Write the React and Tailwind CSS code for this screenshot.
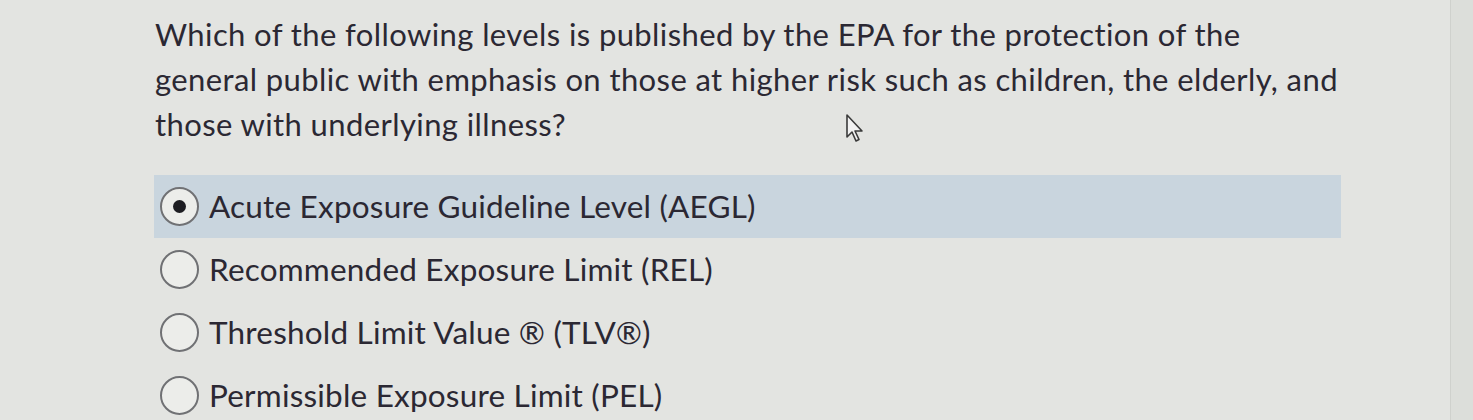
export default function App() {
  const options = [
    "Acute Exposure Guideline Level (AEGL)",
    "Recommended Exposure Limit (REL)",
    "Threshold Limit Value \u00AE (TLV\u00AE)",
    "Permissible Exposure Limit (PEL)",
  ];
  return (
    <div className="w-[1473px] h-[420px] overflow-hidden bg-[#e3e4e1] flex" style={{ fontFamily: "Lato, 'Open Sans', sans-serif" }}>
      <div className="w-[1450px] relative">
        <div className="pl-[155px] w-[1345px] pt-[12px] text-[31px] leading-[45px] text-[#2b2833] tracking-[0.4px]">
          Which of the following levels is published by the EPA for the protection of the general public with emphasis on those at higher risk such as children, the elderly, and those with underlying illness?
        </div>
        <div className="mt-[28px] ml-[154px] w-[1187px] flex flex-col">
          {options.map((o, i) => (
            <div key={i} className={"h-[63px] flex items-center " + (i === 0 ? "bg-[#c9d5de]" : "")}>
              <div className="ml-[6px] w-[39px] h-[39px] rounded-full border-[2px] border-[#707174] bg-[#ecedea] flex items-center justify-center shrink-0">
                {i === 0 && <div className="w-[13px] h-[13px] rounded-full bg-[#1d1d22]" />}
              </div>
              <span className="ml-[10px] text-[31.5px] tracking-[0.2px] text-[#2b2833]">{o}</span>
            </div>
          ))}
        </div>
        <svg className="absolute left-[845px] top-[113px]" width="24" height="32" viewBox="0 0 24 32">
          <path d="M2 2 L2 24 L7 19 L11 28 L14 26.5 L10 18 L17 18 Z" fill="#f2f2f2" stroke="#3a3a3a" strokeWidth="1.6" strokeLinejoin="round" />
        </svg>
      </div>
      <div className="flex-1 bg-[#dcdeda] border-l border-[#cfd1cd]" />
    </div>
  );
}
